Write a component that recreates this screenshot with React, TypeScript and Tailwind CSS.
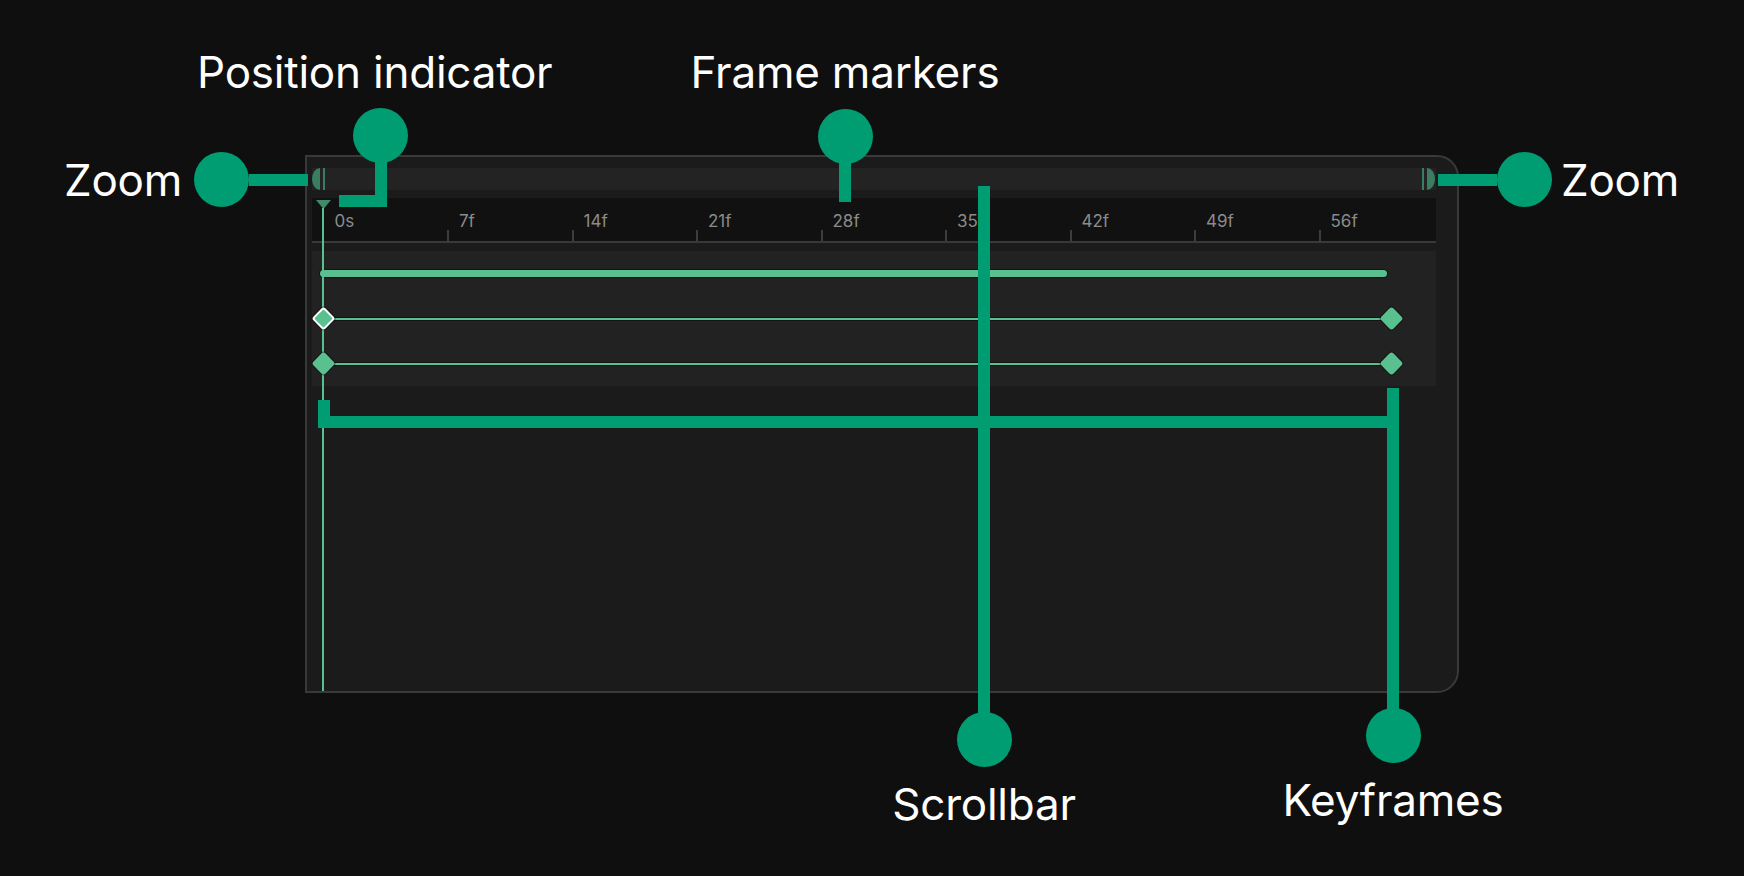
import React from 'react';

const frameLabels = ['0s', '7f', '14f', '21f', '28f', '35f', '42f', '49f', '56f'];

// callout pieces, all in the same teal
const Dot = () => <div className="size-[55px] shrink-0 rounded-full bg-[#009c72]" />;

const Label = ({ children }: { children: React.ReactNode }) => (
  <span className="whitespace-nowrap text-[44px] leading-none tracking-[-0.005em] text-white">{children}</span>
);

const Diamond = ({ selected }: { selected?: boolean }) => (
  <div
    className={
      selected
        ? 'relative z-10 size-[17px] shrink-0 rotate-45 rounded-[3px] border-2 border-white bg-[#5bc08f] shadow-[0_0_0_1px_rgba(0,0,0,0.45)]'
        : 'relative z-10 size-[17px] shrink-0 rotate-45 rounded-[3px] bg-[#5bc08f] shadow-[0_0_0_1px_rgba(0,0,0,0.45)]'
    }
  />
);

const KeyframeRow = ({ selected }: { selected?: boolean }) => (
  <div className="flex h-[45px] items-center pl-[3px]">
    <div className="flex w-[1084.5px] items-center">
      <Diamond selected={selected} />
      <div className="-mx-[8.5px] h-[2px] flex-1 bg-[#5bc08f] shadow-[0_0_0_1px_rgba(0,0,0,0.4)]" />
      <Diamond />
    </div>
  </div>
);

const Timeline: React.FC = () => (
  <div className="relative h-[538px] w-[1154px] rounded-r-[22px] border-2 border-[#393939] bg-[#1b1b1b] pl-[5px] pr-[21px] pt-[11px]">
    {/* scrollbar with zoom handles */}
    <div className="flex h-[22px] items-stretch justify-between bg-[#232323] pr-[1px]">
      <div className="flex items-stretch gap-[3px]">
        <div className="w-[8px] rounded-l-[100%_50%] bg-[#3b7d60]" />
        <div className="w-[2px] bg-[#3b7d60]" />
      </div>
      <div className="flex items-stretch gap-[3px]">
        <div className="w-[2px] bg-[#3b7d60]" />
        <div className="w-[8px] rounded-r-[100%_50%] bg-[#3b7d60]" />
      </div>
    </div>

    {/* frame ruler */}
    <div className="mt-2 flex h-[45px] border-b-2 border-[#393939] bg-[#111111] pl-[11.5px]">
      {frameLabels.map((label, i) => (
        <div key={label} className="flex w-[124.5px] shrink-0 flex-col justify-between">
          <span className="pl-[11px] pt-[15px] text-[17px] leading-none text-[#8b8b8b]">{label}</span>
          <span className={i === 0 ? 'h-[13px] w-[2px]' : '-ml-[1px] h-[13px] w-[2px] bg-[#3d3d3d]'} />
        </div>
      ))}
    </div>

    {/* tracks */}
    <div className="mt-2 flex h-[135px] flex-col bg-[#222222]">
      <div className="flex h-[45px] items-center pl-[8px]">
        <div className="h-[7px] w-[1067px] rounded-full bg-[#5bc08f] shadow-[0_0_0_1px_rgba(0,0,0,0.45)]" />
      </div>
      <KeyframeRow selected />
      <KeyframeRow />
    </div>

    {/* playhead */}
    <svg className="absolute left-[9px] top-[43px]" width="15" height="9" viewBox="0 0 15 9">
      <polygon points="0,0 15,0 7.5,9" fill="#3e8a69" />
    </svg>
    <div className="absolute bottom-0 left-[15px] top-[51px] w-[2px] bg-[#5bc08f]" />
  </div>
);

export default function App() {
  return (
    <div className="relative h-[876px] w-[1744px] overflow-hidden bg-[#0f0f0f] pl-[305px] pt-[155px] font-['Inter',sans-serif]">
      <Timeline />

      {/* Zoom, left */}
      <div className="absolute left-[64px] top-[152px] flex items-center">
        <div className="w-[130px]">
          <Label>Zoom</Label>
        </div>
        <Dot />
        <div className="h-[12px] w-[59px] bg-[#009c72]" />
      </div>

      {/* Zoom, right */}
      <div className="absolute left-[1438px] top-[152px] flex items-center">
        <div className="h-[12px] w-[59px] bg-[#009c72]" />
        <Dot />
        <div className="pl-[9px]">
          <Label>Zoom</Label>
        </div>
      </div>

      {/* Position indicator */}
      <div className="absolute left-[197px] top-[50px] flex flex-col items-start">
        <Label>Position indicator</Label>
        <div className="ml-[156px] mt-[14px]">
          <Dot />
        </div>
        <div className="-mt-[8px] ml-[142px] h-[52px] w-[48px] border-b-[12px] border-r-[12px] border-[#009c72]" />
      </div>

      {/* Frame markers */}
      <div className="absolute left-[675px] top-[50px] flex w-[340px] flex-col items-center">
        <Label>Frame markers</Label>
        <div className="mt-[15px]">
          <Dot />
        </div>
        <div className="-mt-[4px] h-[42px] w-[12px] bg-[#009c72]" />
      </div>

      {/* Scrollbar */}
      <div className="absolute left-[864px] top-[186px] flex w-[240px] flex-col items-center">
        <div className="h-[530px] w-[12px] bg-[#009c72]" />
        <div className="-mt-[4px]">
          <Dot />
        </div>
        <div className="mt-[15px]">
          <Label>Scrollbar</Label>
        </div>
      </div>

      {/* Keyframes: bracket under the tracks, then the stem down */}
      <div className="absolute left-[318px] top-[400px] h-[28px] w-[1081px] border-b-[12px] border-l-[12px] border-[#009c72]" />
      <div className="absolute left-[1273px] top-[388px] flex w-[240px] flex-col items-center">
        <div className="h-[324px] w-[12px] bg-[#009c72]" />
        <div className="-mt-[4px]">
          <Dot />
        </div>
        <div className="mt-[15px]">
          <Label>Keyframes</Label>
        </div>
      </div>
    </div>
  );
}
